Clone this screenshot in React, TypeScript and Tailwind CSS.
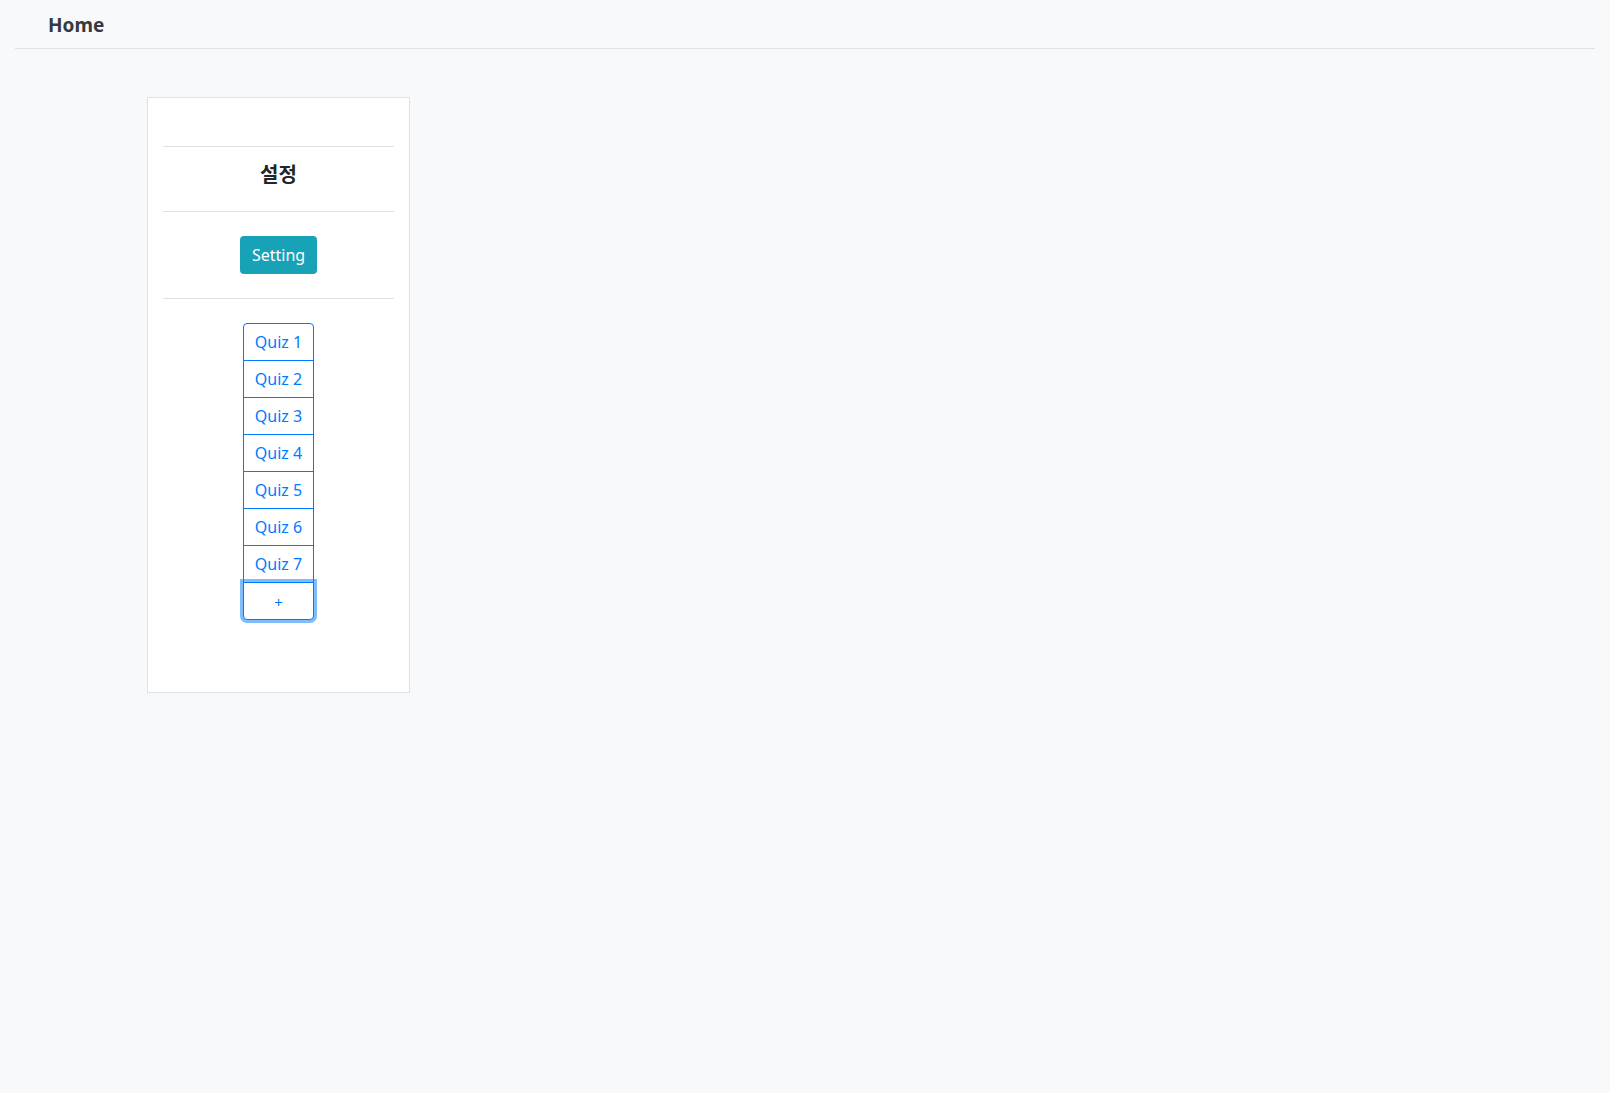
import * as React from 'react';

const QUIZZES = ['Quiz 1', 'Quiz 2', 'Quiz 3', 'Quiz 4', 'Quiz 5', 'Quiz 6', 'Quiz 7'];

export default function App() {
  return (
    <div className="min-h-screen bg-[#f8f9fa] text-[#212529] font-['Noto_Sans','Noto_Sans_CJK_KR',sans-serif]">
      <header className="mx-[15px] flex h-[49px] items-center border-b border-[#dee2e6] pl-[33px] pt-[2px]">
        <span className="text-[19px] font-bold leading-none text-[#343a40]">Home</span>
      </header>

      <div className="ml-[147px] mt-[48px] w-[263px] border border-[#dee2e6] bg-white px-[15px] pb-[72px] pt-[48px]">
        <hr className="border-[#dee2e6]" />
        <div className="flex h-[64px] items-center justify-center pb-[8px]">
          <h5 className="text-[20px] font-bold leading-none">설정</h5>
        </div>
        <hr className="border-[#dee2e6]" />
        <div className="flex justify-center py-[24px]">
          <button className="h-[38px] rounded-[4px] bg-[#17a2b8] px-[12px] text-[16px] text-white">Setting</button>
        </div>
        <hr className="border-[#dee2e6]" />
        <div className="mt-[24px] flex justify-center">
          <div className="flex w-[71px] flex-col">
            {QUIZZES.map((q, i) => (
              <button
                key={q}
                className={
                  'h-[38px] border border-[#007bff] bg-white text-[16px] text-[#007bff] ' +
                  (i === 0 ? 'rounded-t-[4px]' : '-mt-px')
                }
              >
                {q}
              </button>
            ))}
            <button className="relative -mt-px h-[38px] rounded-b-[4px] border border-[#007bff] bg-white pt-[2px] text-[15px] text-[#007bff] shadow-[0_0_0_3px_rgba(0,123,255,0.5)]">
              +
            </button>
          </div>
        </div>
      </div>
    </div>
  );
}
